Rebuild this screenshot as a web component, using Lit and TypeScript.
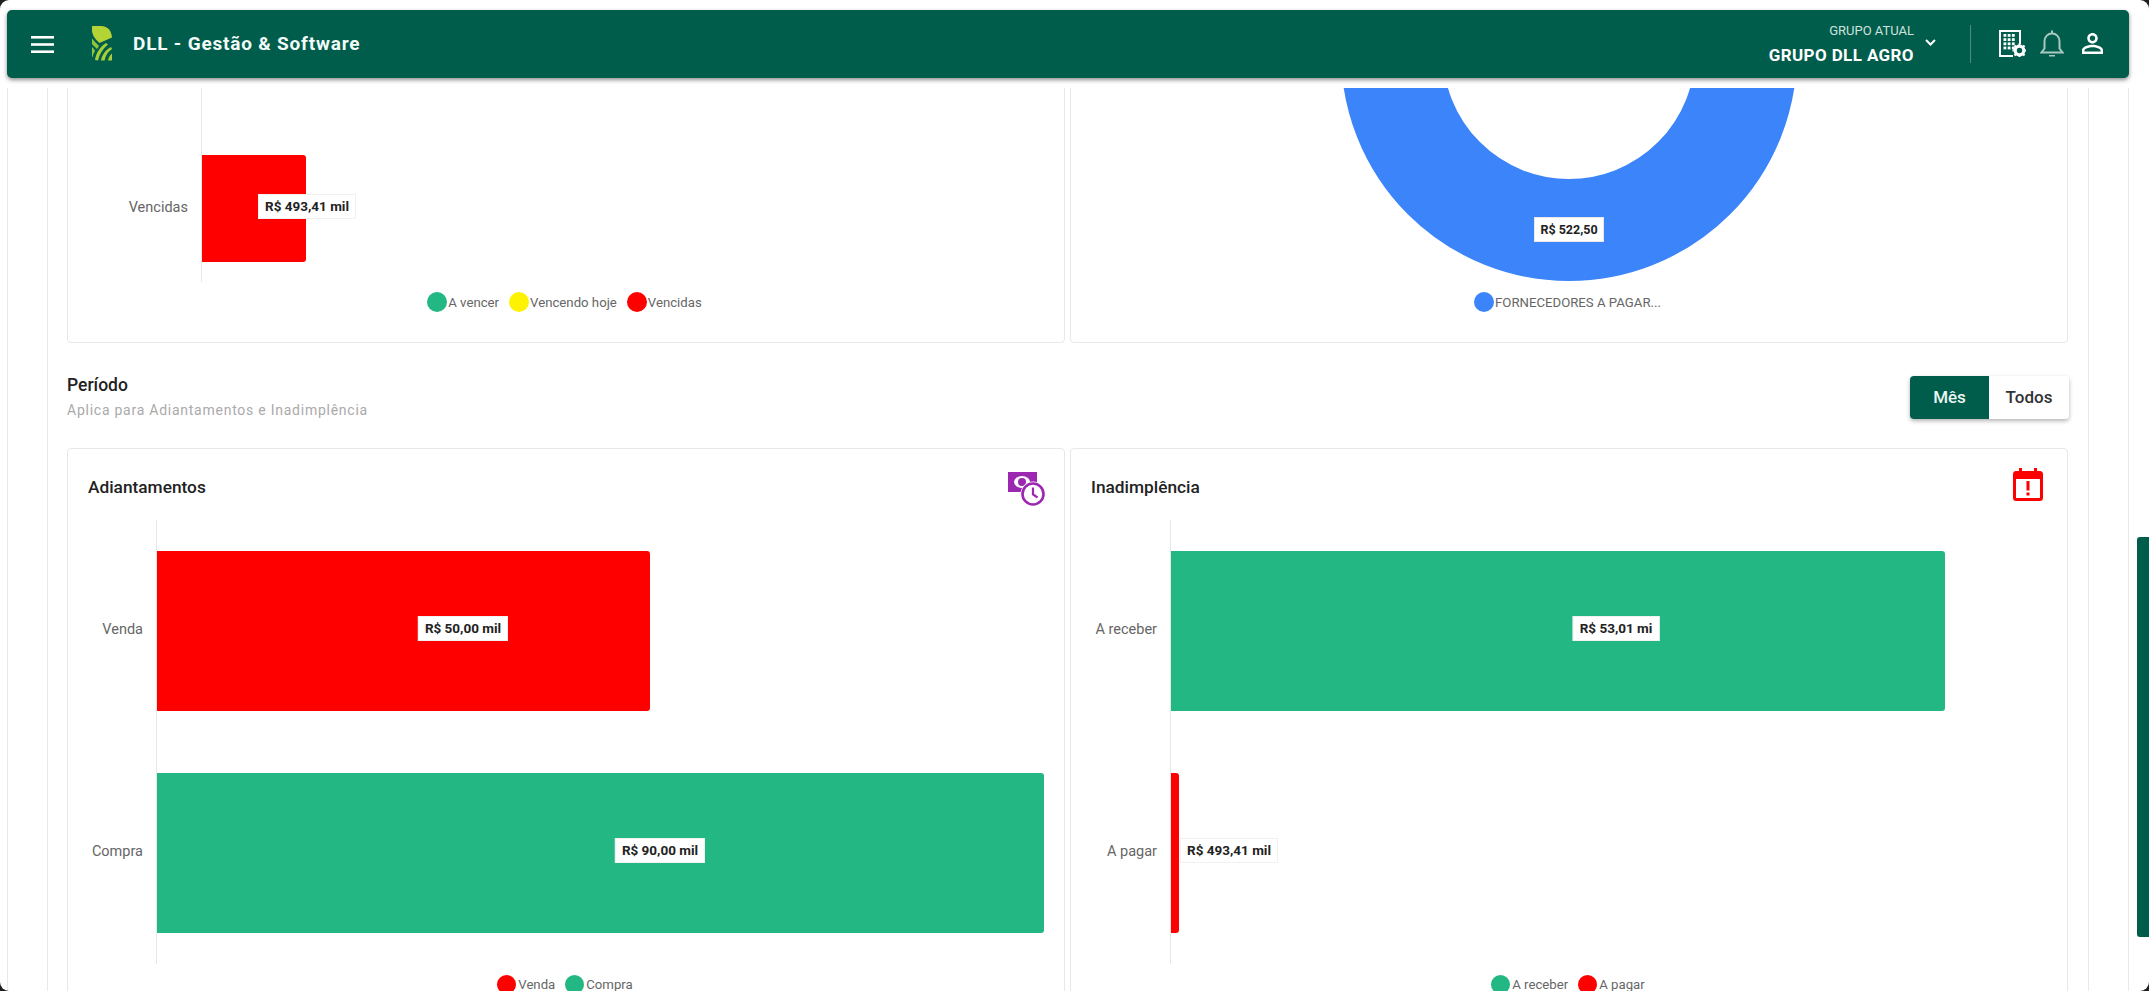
import { LitElement, html, css, svg } from "lit";
import { customElement } from "lit/decorators.js";

const GREEN = "#23b883";
const RED = "#ff0000";
const BLUE = "#3b84fa";

interface Row { cat: string; width: number; color: string; value: string; center: number; }
interface Leg { label: string; color: string; }

const menuIcon = html`<svg class="menu" viewBox="0 0 23 17"><rect y="0" width="23" height="2.6" fill="#fff"/><rect y="7.2" width="23" height="2.6" fill="#fff"/><rect y="14.4" width="23" height="2.6" fill="#fff"/></svg>`;

const logoIcon = html`<svg class="logo" viewBox="0 0 20 35">
  <path d="M0 0H9C16 0 19.500 5 20 11.500L7.500 17C4 14 0.500 10 0 5Z" fill="#b4d334"/>
  <path d="M0 12.500C2 15 4.500 17.500 7 20L5 23C3 21 1 19 0 18Z" fill="#8ec63f"/>
  <path d="M0 21C1.500 22.500 2.500 23.500 3 25C1.800 27 .9 29 .6 31L0 31Z" fill="#8ec63f"/>
  <path d="M3 34C4 27 8 21 14 17L16 18.500C11 22.500 7.500 28 6 34.500Z" fill="#a6ce39"/>
  <path d="M9 34.500C10 28.500 13.500 24 19 21L20 23C16 25.500 13.500 29.500 12.500 34.500Z" fill="#a6ce39"/>
  <path d="M16 34.500C16.500 31.500 18 29 20 27.500V34.500Z" fill="#a6ce39"/>
</svg>`;

const chevron = html`<svg class="chev" viewBox="0 0 11 7"><path d="M1 1L5.500 5.500L10 1" fill="none" stroke="#fff" stroke-width="2"/></svg>`;

const gridDots = [0, 1, 2].flatMap((c) => [0, 1, 2, 3].map((r) => svg`<rect x="${5.5 + c * 4.2}" y="${5 + r * 4.2}" width="2.8" height="2.8" fill="#fff"/>`));
const buildingIcon = html`<svg class="building" viewBox="0 0 28 28">
  <path d="M1 1H23V15H21V3H3V26H15V28H1Z" fill="#fff"/>
  ${gridDots}
  <circle cx="21.500" cy="21.500" r="4.300" fill="none" stroke="#fff" stroke-width="3.200"/>
  <path d="M21.500 14.500V17M21.500 26V28.500M14.500 21.500H17M26 21.500H28M16.500 16.500L18.300 18.300M24.700 24.700L26.500 26.500M26.500 16.500L24.700 18.300M18.300 24.700L16.500 26.500" stroke="#fff" stroke-width="2.200"/>
</svg>`;

const bellIcon = html`<svg class="bell" viewBox="0 0 24 27"><path d="M1.500 22.500H22.500L19.500 18.500V11.500C19.500 6.500 16 3.500 12 3.500C8 3.500 4.500 6.500 4.500 11.500V18.500Z" fill="none" stroke="#a8c9c0" stroke-width="2"/><path d="M12 .5V3.500" stroke="#a8c9c0" stroke-width="2"/><path d="M9 25H15V26.500H9Z" fill="#a8c9c0"/></svg>`;

const personIcon = html`<svg class="person" viewBox="4 4 16 16"><path fill="#fff" d="M12 5.900c1.160 0 2.100.940 2.100 2.100s-.940 2.100-2.100 2.100S9.900 9.160 9.900 8s.940-2.100 2.100-2.100m0 9c2.970 0 6.100 1.460 6.100 2.100v1.100H5.900V17c0-.640 3.130-2.100 6.100-2.100M12 4C9.790 4 8 5.790 8 8s1.790 4 4 4 4-1.790 4-4-1.790-4-4-4zm0 9c-2.670 0-8 1.340-8 4v3h16v-3c0-2.660-5.330-4-8-4z"/></svg>`;

const moneyClock = html`<svg class="ic-money" viewBox="0 0 37 34">
  <path d="M0 0H29V20H0Z" fill="#9c27b0"/>
  <ellipse cx="14" cy="10" rx="8" ry="6" fill="#fff"/>
  <circle cx="14" cy="10" r="4" fill="#9c27b0"/>
  <circle cx="25" cy="22" r="12.500" fill="#fff"/>
  <circle cx="25" cy="22" r="10.500" fill="#fff" stroke="#9c27b0" stroke-width="2.600"/>
  <path d="M25 15.500V22.500L29.500 25.500" fill="none" stroke="#9c27b0" stroke-width="2.200"/>
</svg>`;

const calendarAlert = html`<svg class="ic-cal" viewBox="0 0 30 33">
  <path d="M6 0H9V3H21V0H24V3H27C28.700 3 30 4.300 30 6V30C30 31.700 28.700 33 27 33H3C1.300 33 0 31.700 0 30V6C0 4.300 1.300 3 3 3H6ZM3 11V30H27V11Z" fill="#ff0000"/>
  <rect x="13.500" y="13" width="3" height="9.500" fill="#ff0000"/>
  <rect x="13.500" y="24.500" width="3" height="3" fill="#ff0000"/>
</svg>`;

const legend = (items: Leg[]) => html`<div class="legend">
  ${items.map((i) => html`<div class="leg-item"><span class="dot" style="background:${i.color}"></span><span>${i.label}</span></div>`)}
</div>`;

const barChart = (rows: Row[], catWidth: number) => html`<div class="chart">
  <div class="cats" style="width:${catWidth}px">
    ${rows.map((r) => html`<div class="cat">${r.cat}</div>`)}
  </div>
  <div class="plot">
    ${rows.map((r) => html`<div class="track">
      <div class="bar" style="width:${r.width}px;background:${r.color}"></div>
      <div class="tip" style="left:${r.center}px">${r.value}</div>
    </div>`)}
  </div>
</div>`;

@customElement("app-root")
export class AppRoot extends LitElement {
  static styles = css`
    :host { display: block; height: 991px; width: 2149px; overflow: hidden; position: relative; background: #fff; font-family: Roboto, "Liberation Sans", sans-serif; color: #222; }
    .topbar { margin: 10px 20px 0 7px; height: 68px; background: #005c4b; border-radius: 5px; box-shadow: 0 2px 4px rgba(0,0,0,.45); display: flex; align-items: center; color: #fff; position: relative; z-index: 2; }
    .menu { width: 23px; height: 17px; margin-left: 24px; flex: none; }
    .logo { width: 20px; height: 35px; margin-left: 38px; flex: none; margin-top: -1px; }
    .brand { margin-left: 21px; font-size: 19px; font-weight: 700; letter-spacing: .8px; color: #f2fbf8; margin-top: -2px; }
    .spacer { flex: 1; }
    .group { display: flex; flex-direction: column; align-items: flex-end; }
    .group small { font-size: 13px; line-height: 14px; color: #cfe3dd; }
    .group b { font-size: 17px; line-height: 20px; font-weight: 700; margin-top: 7px; letter-spacing: .4px; }
    .chev { width: 11px; height: 7px; margin-left: 11px; margin-top: -4px; flex: none; }
    .vsep { width: 1px; height: 38px; background: #4f8a7d; margin-left: 34px; flex: none; }
    .building { width: 28px; height: 28px; margin-left: 27px; flex: none; margin-top: -2px; }
    .bell { width: 24px; height: 27px; margin-left: 14px; flex: none; margin-top: -1px; }
    .person { width: 21px; height: 21px; margin-left: 18px; margin-right: 26px; flex: none; margin-top: -2px; }

    .viewport { margin-top: 10px; height: 903px; overflow: hidden; }
    .frame-a { margin: -40px 20px 0 7px; border-left: 1px solid #e9e9e9; border-right: 1px solid #e9e9e9; padding: 0 39px; min-height: 1100px; }
    .frame-b { border-left: 1px solid #e9e9e9; border-right: 1px solid #e9e9e9; padding: 0 19px; min-height: 1100px; }
    .grid { display: grid; grid-template-columns: 998px 998px; column-gap: 5px; }
    .card { border: 1px solid #e8e8e8; border-radius: 4px; background: #fff; box-sizing: border-box; display: flex; flex-direction: column; }
    .card.short { height: 295px; }
    .card.tall { height: 620px; }

    .chart { display: flex; }
    .cats { display: flex; flex-direction: column; flex: none; padding: 31px 0; gap: 62px; box-sizing: border-box; }
    .cat { height: 160px; box-sizing: border-box; display: flex; align-items: center; justify-content: flex-end; padding: 0 13px 3px 0; font-size: 14.500px; color: #666; }
    .plot { flex: 1; border-left: 1px solid #e6e6e6; display: flex; flex-direction: column; padding: 31px 0; gap: 62px; }
    .track { height: 160px; position: relative; display: flex; }
    .bar { height: 100%; border-radius: 0 3px 3px 0; }
    .tip { position: absolute; top: 50%; margin-top: -15px; height: 25px; line-height: 23px; box-sizing: border-box; transform: translateX(-50%); background: #fff; border: 1px solid #f1f1f1; padding: 0 6px; font-size: 13.500px; font-weight: 700; color: #222; white-space: nowrap; }

    .short .chart { height: 233px; flex: none; }
    .short .cats, .short .plot { padding: 0 0 20px; justify-content: flex-end; }
    .short .cat, .short .track { height: 107px; }

    .donut-wrap { position: relative; height: 233px; display: flex; justify-content: center; flex: none; }
    .donut { width: 480px; height: 233px; display: block; }
    .donut-tip { position: absolute; left: 50%; top: 168px; height: 25px; line-height: 23px; box-sizing: border-box; transform: translateX(-50%); background: #fff; border: 1px solid #e8e8e8; width: 70px; text-align: center; font-size: 12.500px; font-weight: 700; color: #222; }

    .legend { display: flex; justify-content: center; align-items: center; gap: 10px; margin-top: 10px; height: 20px; font-size: 13.200px; color: #666; }
    .short .legend { padding-right: 3px; }
    .leg-item { display: flex; align-items: center; gap: 1px; }
    .dot { width: 20px; height: 20px; border-radius: 50%; flex: none; }

    .section { height: 105px; box-sizing: border-box; padding-top: 32px; display: flex; justify-content: space-between; align-items: flex-start; }
    .section h2 { margin: 0; font-size: 17.500px; line-height: 20px; font-weight: 500; color: #222; }
    .section p { margin: 5px 0 0; font-size: 14px; line-height: 20px; color: #aaa; letter-spacing: .75px; }
    .toggle { margin-top: 1px; display: flex; height: 43px; border-radius: 4px; box-shadow: 0 2px 4px rgba(0,0,0,.3); overflow: hidden; font-size: 17px; font-weight: 500; }
    .toggle div { display: flex; align-items: center; justify-content: center; padding-bottom: 2px; box-sizing: border-box; }
    .toggle .on { width: 79px; background: #005c4b; color: #eaf7f3; }
    .toggle .off { width: 80px; background: #fff; color: #333; }

    .head { height: 71px; display: flex; justify-content: space-between; align-items: flex-start; padding: 0 19px 0 20px; flex: none; }
    .head h3 { margin: 28px 0 0; font-size: 17.300px; line-height: 20px; font-weight: 500; color: #222; }
    .ic-money { width: 37px; height: 34px; margin-top: 23px; flex: none; }
    .ic-cal { width: 30px; height: 33px; margin: 19px 5px 0 0; flex: none; }
    .tall .dot { width: 19px; height: 19px; }
    .tall .leg-item { gap: 2px; }
    .tall .legend { padding-right: 2px; }

    .thumb { position: absolute; right: 0; top: 537px; width: 12px; height: 400px; background: #005c4b; border-radius: 3px 0 0 3px; z-index: 3; }
    .window { position: absolute; inset: 0; border-radius: 9px; box-shadow: 0 0 0 10px #1f1f1f; pointer-events: none; z-index: 4; }
  `;

  render() {
    const vencidas: Row[] = [{ cat: "Vencidas", width: 104, color: RED, value: "R$ 493,41 mil", center: 105 }];
    const adiant: Row[] = [
      { cat: "Venda", width: 493, color: RED, value: "R$ 50,00 mil", center: 306 },
      { cat: "Compra", width: 887, color: GREEN, value: "R$ 90,00 mil", center: 503 },
    ];
    const inad: Row[] = [
      { cat: "A receber", width: 774, color: GREEN, value: "R$ 53,01 mi", center: 445 },
      { cat: "A pagar", width: 8, color: RED, value: "R$ 493,41 mil", center: 58 },
    ];
    return html`
      <header class="topbar">
        ${menuIcon}${logoIcon}
        <div class="brand">DLL - Gestão &amp; Software</div>
        <div class="spacer"></div>
        <div class="group"><small>GRUPO ATUAL</small><b>GRUPO DLL AGRO</b></div>
        ${chevron}
        <div class="vsep"></div>
        ${buildingIcon}${bellIcon}${personIcon}
      </header>
      <div class="viewport">
        <div class="frame-a"><div class="frame-b">
          <div class="grid">
            <section class="card short">
              ${barChart(vencidas, 133)}
              ${legend([
                { label: "A vencer", color: GREEN },
                { label: "Vencendo hoje", color: "#fff200" },
                { label: "Vencidas", color: RED },
              ])}
            </section>
            <section class="card short">
              <div class="donut-wrap">
                <svg class="donut" viewBox="0 0 480 233"><circle cx="240" cy="4" r="177" fill="none" stroke="${BLUE}" stroke-width="102"/></svg>
                <div class="donut-tip">R$ 522,50</div>
              </div>
              ${legend([{ label: "FORNECEDORES A PAGAR...", color: BLUE }])}
            </section>
          </div>
          <div class="section">
            <div><h2>Período</h2><p>Aplica para Adiantamentos e Inadimplência</p></div>
            <div class="toggle"><div class="on">Mês</div><div class="off">Todos</div></div>
          </div>
          <div class="grid">
            <section class="card tall">
              <div class="head"><h3>Adiantamentos</h3>${moneyClock}</div>
              ${barChart(adiant, 88)}
              ${legend([{ label: "Venda", color: RED }, { label: "Compra", color: GREEN }])}
            </section>
            <section class="card tall">
              <div class="head"><h3>Inadimplência</h3>${calendarAlert}</div>
              ${barChart(inad, 99)}
              ${legend([{ label: "A receber", color: GREEN }, { label: "A pagar", color: RED }])}
            </section>
          </div>
        </div></div>
      </div>
      <div class="thumb"></div>
      <div class="window"></div>
    `;
  }
}
